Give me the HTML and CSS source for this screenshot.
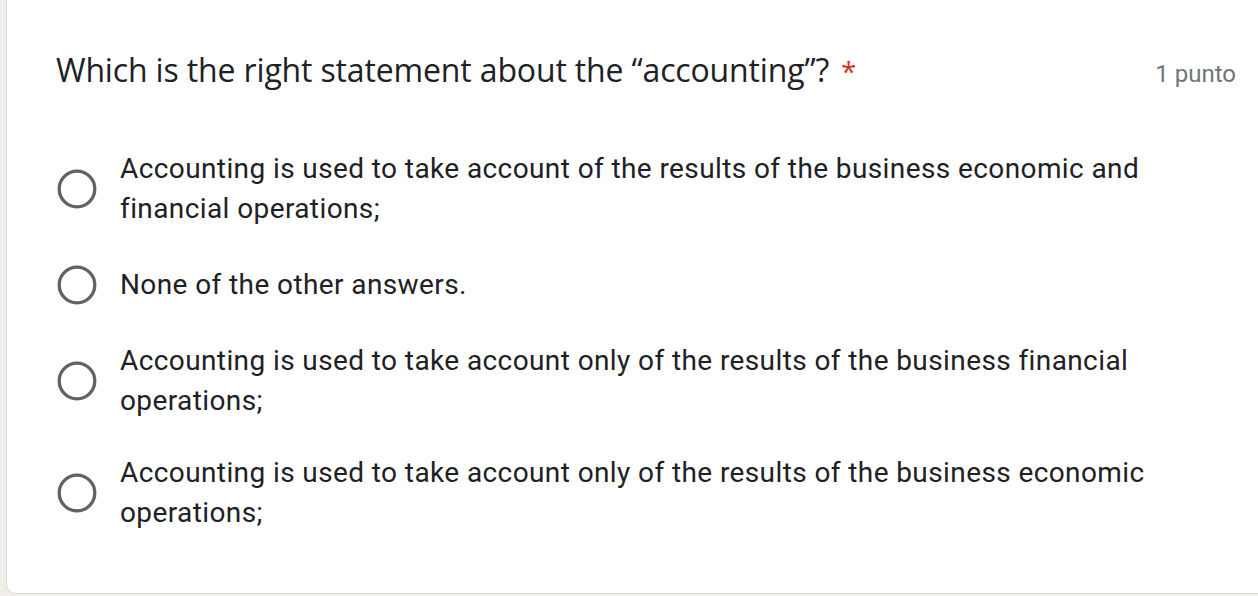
FILE: index.html
```html
<!DOCTYPE html>
<html>
<head>
<meta charset="utf-8">
<link rel="stylesheet" href="styles.css">
</head>
<body>
<div class="card">
  <div class="header">
    <div class="title">Which is the right statement about the “accounting”?<span class="req">*</span></div>
    <div class="points">1 punto</div>
  </div>
  <div class="options">
    <label class="option">
      <span class="radio"><svg viewBox="0 0 40 40" width="40" height="40"><circle cx="20" cy="20" r="17.8" fill="none" stroke="#5f6368" stroke-width="3.3"/></svg></span>
      <span class="text">Accounting is used to take account of the results of the business economic and financial operations;</span>
    </label>
    <label class="option">
      <span class="radio"><svg viewBox="0 0 40 40" width="40" height="40"><circle cx="20" cy="20" r="17.8" fill="none" stroke="#5f6368" stroke-width="3.3"/></svg></span>
      <span class="text">None of the other answers.</span>
    </label>
    <label class="option">
      <span class="radio"><svg viewBox="0 0 40 40" width="40" height="40"><circle cx="20" cy="20" r="17.8" fill="none" stroke="#5f6368" stroke-width="3.3"/></svg></span>
      <span class="text">Accounting is used to take account only of the results of the business financial operations;</span>
    </label>
    <label class="option option-last">
      <span class="radio"><svg viewBox="0 0 40 40" width="40" height="40"><circle cx="20" cy="20" r="17.8" fill="none" stroke="#5f6368" stroke-width="3.3"/></svg></span>
      <span class="text">Accounting is used to take account only of the results of the business economic operations;</span>
    </label>
  </div>
</div>
</body>
</html>
```
FILE: styles.css
```css
html, body {
  margin: 0;
  padding: 0;
}
body {
  background: #f1ede8;
  width: 1258px;
  height: 596px;
  overflow: hidden;
  padding-left: 6px;
  box-sizing: border-box;
}
.card {
  width: 1270px;
  height: 594px;
  box-sizing: border-box;
  background: #fff;
  border-left: 1.5px solid #dadce0;
  border-bottom: 1.5px solid #dadce0;
  border-radius: 0 0 10px 10px;
  padding: 48px 35px 0 49px;
}
.header {
  display: flex;
  justify-content: space-between;
  align-items: baseline;
  width: 1180px;
}
.title {
  font-family: "Open Sans", sans-serif;
  font-size: 32px;
  line-height: 44px;
  color: #202124;
  letter-spacing: -0.15px;
}
.req {
  color: #d93025;
  margin-left: 12px;
  font-size: 28px;
}
.points {
  font-family: Roboto, sans-serif;
  font-size: 24px;
  color: #70757a;
}
.options {
  display: flex;
  flex-direction: column;
  gap: 36px;
  margin-top: 56px;
}
.option {
  display: flex;
  align-items: center;
  gap: 23px;
}
.option-last {
  margin-top: -4px;
}
.radio {
  width: 40px;
  height: 40px;
  flex: none;
  display: flex;
  margin-left: 1px;
}
.text {
  font-family: Roboto, sans-serif;
  font-size: 28px;
  letter-spacing: 0.4px;
  line-height: 40px;
  color: #202124;
  width: 1050px;
}
```
